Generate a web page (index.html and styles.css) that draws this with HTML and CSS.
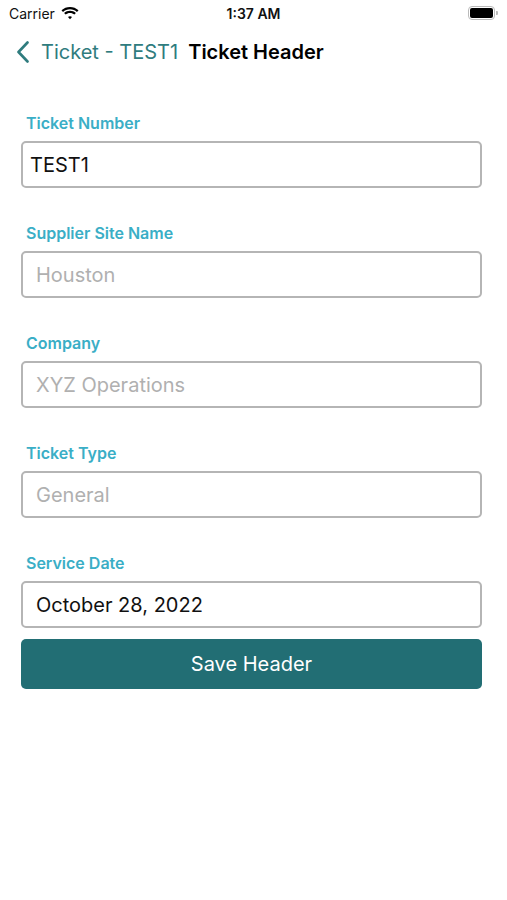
FILE: index.html
```html
<!DOCTYPE html>
<html lang="en">
    <head>
        <meta charset="UTF-8">
        <meta name="viewport" content="width=device-width, initial-scale=1.0">
        <title>Ticket Header</title>
        <link rel="stylesheet" href="styles.css">
    </head>
    <body>
        <div class="status">
            <div class="status-left">
                <span>Carrier</span>
                <svg class="wifi" width="18" height="13" viewBox="0 0 18 13">
                    <path d="M9 2.2c2.7 0 5.1 1 7 2.7l1.5-1.6C15.2 1.2 12.2 0 9 0S2.8 1.2.5 3.3L2 4.9c1.9-1.7 4.3-2.7 7-2.7z" fill="#000"/>
                    <path d="M9 5.9c1.7 0 3.2.6 4.4 1.7l1.5-1.6C13.3 4.6 11.2 3.7 9 3.7S4.7 4.6 3.1 6l1.5 1.6C5.8 6.5 7.3 5.9 9 5.9z" fill="#000"/>
                    <path d="M9 9.3c.8 0 1.5.3 2 .8L9 12.3 7 10.1c.5-.5 1.2-.8 2-.8z" fill="#000"/>
                </svg>
            </div>
            <div class="status-time">1:37 AM</div>
            <div class="status-right">
                <div class="battery"><div class="battery-fill"></div></div>
                <div class="battery-cap"></div>
            </div>
        </div>
        <div class="nav">
            <svg class="back" width="14" height="22" viewBox="0 0 14 22">
                <path d="M11.5 1.5 2.5 11l9 9.5" fill="none" stroke="#2f7c7e" stroke-width="2.6" stroke-linecap="round" stroke-linejoin="round"/>
            </svg>
            <span class="back-text">Ticket - TEST1</span>
            <span class="nav-title">Ticket Header</span>
        </div>
        <form class="form">
            <div class="field">
                <label>Ticket Number</label>
                <div class="input input-value input-tight">TEST1</div>
            </div>
            <div class="field">
                <label>Supplier Site Name</label>
                <div class="input input-placeholder">Houston</div>
            </div>
            <div class="field">
                <label>Company</label>
                <div class="input input-placeholder">XYZ Operations</div>
            </div>
            <div class="field">
                <label>Ticket Type</label>
                <div class="input input-placeholder">General</div>
            </div>
            <div class="field">
                <label>Service Date</label>
                <div class="input input-value">October 28, 2022</div>
            </div>
            <button type="button" class="save">Save Header</button>
        </form>
    </body>
</html>
```
FILE: styles.css
```css
body {
    margin: 0;
    font-family: Inter, "Liberation Sans", sans-serif;
    color: #111;
    background: #fff;
}

.status {
    height: 28px;
    display: flex;
    align-items: center;
    justify-content: space-between;
    padding: 0 9px;
    position: relative;
}

.status-left {
    display: flex;
    align-items: center;
    gap: 6px;
    font-size: 14px;
    padding-bottom: 2px;
}

.status-time {
    position: absolute;
    left: 0;
    right: 0;
    text-align: center;
    font-size: 14px;
    font-weight: 600;
    padding-bottom: 2px;
}

.status-right {
    display: flex;
    align-items: center;
    padding-bottom: 2px;
    margin-right: 0;
}

.battery {
    width: 23px;
    height: 10px;
    border: 1.5px solid #bbb;
    border-radius: 4px;
    padding: 1px;
}

.battery-fill {
    width: 100%;
    height: 100%;
    background: #000;
    border-radius: 2px;
}

.battery-cap {
    width: 2px;
    height: 4px;
    background: #bbb;
    border-radius: 0 1px 1px 0;
    margin-left: 1px;
}

.nav {
    height: 48px;
    display: flex;
    align-items: center;
    padding-left: 16px;
}

.back {
    margin-right: 11px;
}

.back-text {
    color: #2f7c7e;
    font-size: 20px;
    margin-right: 10px;
}

.nav-title {
    font-size: 20px;
    font-weight: 600;
    color: #000;
}

.form {
    padding: 37px 25px 0 21px;
}

.field {
    margin-bottom: 35px;
}

.field:last-of-type {
    margin-bottom: 11px;
}

.field label {
    display: block;
    color: #3aaec6;
    font-size: 16px;
    font-weight: 600;
    line-height: 20px;
    margin: 0 0 8px 5px;
}

.input {
    box-sizing: border-box;
    height: 47px;
    border: 2px solid #b5b5b5;
    border-radius: 5px;
    display: flex;
    align-items: center;
    padding-left: 13px;
    font-size: 20px;
}

.input-tight {
    padding-left: 7px;
}

.input-value {
    color: #111;
}

.input-placeholder {
    color: #b0b0b0;
}

.save {
    display: block;
    width: 100%;
    height: 50px;
    border: none;
    border-radius: 5px;
    background: #226e74;
    color: #fff;
    font-family: inherit;
    font-size: 20px;
}
```
